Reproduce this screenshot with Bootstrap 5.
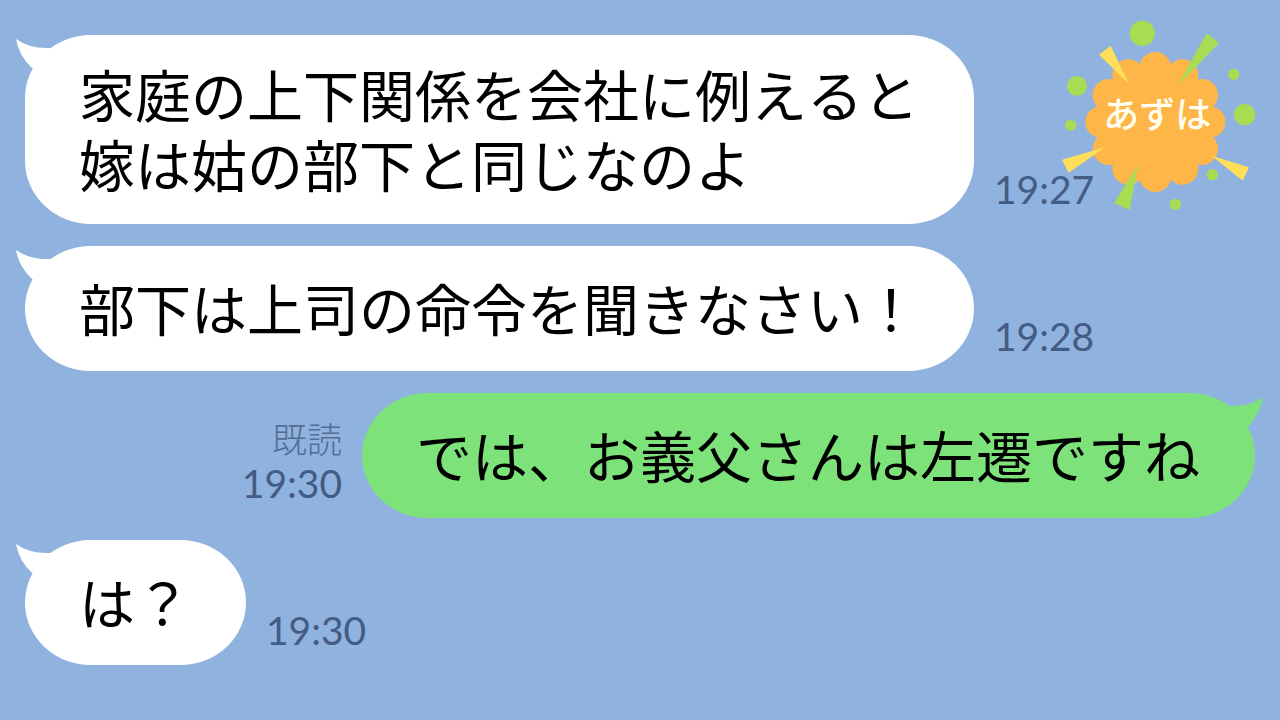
<!DOCTYPE html>
<html lang="ja">
<head>
<meta charset="utf-8">
<meta name="viewport" content="width=device-width, initial-scale=1">
<title>トーク</title>
<link href="https://cdn.jsdelivr.net/npm/bootstrap@5.3.0/dist/css/bootstrap.min.css" rel="stylesheet">
<style>
  body { background: #8fb2df; color: #000; font-family: "Liberation Sans", "Noto Sans CJK JP", sans-serif; }
  .talk { padding: 35px 25px; gap: 22px; }
  .talk-row { gap: 20px; }
  .bubble {
    min-height: 125px; padding: 28px 55px 21px 54px; border-radius: 66px / 63px;
    font-size: 56px; line-height: 70px; font-kerning: none; background: #fff;
  }
  .bubble-mine { background: #7de27a; }
  .tail { top: 4px; left: -9px; width: 42px; height: 32px; fill: #fff; }
  .tail-mine { left: auto; right: -8px; fill: #7de27a; }
  .meta { color: #445b83; padding-bottom: 13px; }
  .clock { font-family: Lato, sans-serif; font-size: 39px; line-height: 44px; }
  .seen { font-family: "Liberation Sans", "Noto Sans CJK JP", sans-serif; font-size: 35px; line-height: 40px; font-weight: 300; color: #556d93; }
  .sticker { top: 10px; right: 20px; width: 210px; height: 210px; }
  .sticker text { font-family: "Noto Sans CJK JP", sans-serif; font-size: 108px; font-weight: 500; }
</style>
</head>
<body>
<main class="talk position-relative d-flex flex-column">

  <div class="talk-row d-flex align-items-end">
    <div class="bubble position-relative d-flex align-items-center">
      <svg class="tail position-absolute" viewBox="0 0 42 32" aria-hidden="true"><path d="M0 0Q14 10 34 9L42 32L16 29Q3 17 0 0Z"/></svg>
      <span>家庭の上下関係を会社に例えると<br>嫁は姑の部下と同じなのよ</span>
    </div>
    <div class="meta"><time class="clock d-block">19:27</time></div>
  </div>

  <div class="talk-row d-flex align-items-end">
    <div class="bubble position-relative d-flex align-items-center">
      <svg class="tail position-absolute" viewBox="0 0 42 32" aria-hidden="true"><path d="M0 0Q14 10 34 9L42 32L16 29Q3 17 0 0Z"/></svg>
      <span>部下は上司の命令を聞きなさい！</span>
    </div>
    <div class="meta"><time class="clock d-block">19:28</time></div>
  </div>

  <div class="talk-row d-flex align-items-end justify-content-end">
    <div class="meta text-end">
      <span class="seen d-block">既読</span>
      <time class="clock d-block">19:30</time>
    </div>
    <div class="bubble bubble-mine position-relative d-flex align-items-center">
      <svg class="tail tail-mine position-absolute" viewBox="0 0 42 32" aria-hidden="true"><path d="M42 0Q28 10 10 9L0 32L27 30Q39 17 42 0Z"/></svg>
      <span>では、お義父さんは左遷ですね</span>
    </div>
  </div>

  <div class="talk-row d-flex align-items-end">
    <div class="bubble position-relative d-flex align-items-center">
      <svg class="tail position-absolute" viewBox="0 0 42 32" aria-hidden="true"><path d="M0 0Q14 10 34 9L42 32L16 29Q3 17 0 0Z"/></svg>
      <span>は？</span>
    </div>
    <div class="meta"><time class="clock d-block">19:30</time></div>
  </div>

  <svg class="sticker position-absolute" viewBox="0 0 630 630" role="img" aria-label="あずは">
    <g fill="#ffb648">
      <circle cx="316" cy="336" r="165"/>
      <circle cx="316" cy="174" r="48"/><circle cx="397" cy="196" r="48"/><circle cx="456" cy="255" r="48"/>
      <circle cx="478" cy="336" r="48"/><circle cx="456" cy="417" r="48"/><circle cx="397" cy="476" r="48"/>
      <circle cx="316" cy="498" r="48"/><circle cx="235" cy="476" r="48"/><circle cx="176" cy="417" r="48"/>
      <circle cx="154" cy="336" r="48"/><circle cx="176" cy="255" r="48"/><circle cx="235" cy="196" r="48"/>
    </g>
    <g fill="#a8dc52">
      <circle cx="277" cy="70" r="38"/><circle cx="81" cy="228" r="30"/><circle cx="62" cy="346" r="17"/>
      <circle cx="551" cy="193" r="17"/><circle cx="584" cy="314" r="32"/><circle cx="487" cy="494" r="17"/>
      <circle cx="376" cy="583" r="17"/>
      <path d="M470 70L507 99L382 228ZM264 465L192 579L239 600Z"/>
    </g>
    <path fill="#ffdf59" d="M147 134L182 107L237 222ZM36 449L165 412L56 488ZM485 437L597 472L578 512Z"/>
    <text x="322" y="354" text-anchor="middle" fill="#fffef0">あずは</text>
  </svg>
</main>
<script src="https://cdn.jsdelivr.net/npm/bootstrap@5.3.0/dist/js/bootstrap.bundle.min.js"></script>
</body>
</html>
